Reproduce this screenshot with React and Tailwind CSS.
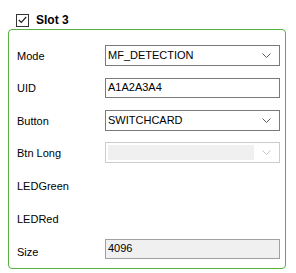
import React from "react";

const font = { fontFamily: '"Liberation Sans", Arial, sans-serif' };

function Chevron({ disabled }) {
  return (
    <svg width="9" height="5" viewBox="0 0 9 5" className="shrink-0">
      <polyline
        points="0.5,0.5 4.5,4.5 8.5,0.5"
        fill="none"
        stroke={disabled ? "#c4c4c4" : "#5a5a5a"}
        strokeWidth="1"
      />
    </svg>
  );
}

function Combo({ value, disabled }) {
  if (disabled) {
    return (
      <div className="flex items-center w-[175px] h-[21px] border border-[#cccccc] bg-white pl-[2px] pr-[8px]">
        <div className="flex-1 h-[15px] bg-[#f0f0f0] mr-[8px]" />
        <Chevron disabled />
      </div>
    );
  }
  return (
    <div className="flex items-center w-[175px] h-[21px] border border-[#7a7a7a] bg-white pl-[2px] pr-[8px]">
      <span className="flex-1 text-[11px] leading-none text-black">{value}</span>
      <Chevron />
    </div>
  );
}

function TextBox({ value, readOnly }) {
  return (
    <div
      className={`flex items-center w-[175px] h-[20px] border px-[2px] text-[11px] leading-none text-black ${
        readOnly ? "bg-[#f0f0f0] border-[#a0a0a0]" : "bg-white border-[#7a7a7a]"
      }`}
    >
      {value}
    </div>
  );
}

function Row({ label, mt, low, children }) {
  return (
    <div className="flex items-center h-[21px]" style={{ marginTop: mt }}>
      <span className={`w-[88px] text-[11px] leading-none text-black ${low ? "pt-[7px]" : "pt-[2px]"}`}>
        {label}
      </span>
      {children}
    </div>
  );
}

export default function App() {
  return (
    <div className="w-[296px] h-[273px] bg-white relative" style={font}>
      <div className="flex items-center pl-[16px] pt-[9px] h-[22px] box-content">
        <div className="w-[13px] h-[13px] border border-[#333333] bg-white flex items-center justify-center">
          <svg width="9" height="8" viewBox="0 0 9 8">
            <polyline points="0.8,4 3.3,6.5 8.2,1" fill="none" stroke="#222" strokeWidth="1.2" />
          </svg>
        </div>
        <span className="ml-[7px] text-[12px] font-bold text-black leading-none">Slot 3</span>
      </div>
      <div className="mt-[-2px] ml-[8px] w-[278px] h-[240px] border border-[#56b13f] rounded-[4px] pl-[8px] pt-[15px]">
        <Row label="Mode" mt={0}>
          <Combo value="MF_DETECTION" />
        </Row>
        <Row label="UID" mt={11}>
          <TextBox value="A1A2A3A4" />
        </Row>
        <Row label="Button" mt={12}>
          <Combo value="SWITCHCARD" />
        </Row>
        <Row label="Btn Long" mt={11}>
          <Combo disabled />
        </Row>
        <Row label="LEDGreen" mt={12} />
        <Row label="LEDRed" mt={12} />
        <Row label="Size" mt={9} low>
          <TextBox value="4096" readOnly />
        </Row>
      </div>
    </div>
  );
}
